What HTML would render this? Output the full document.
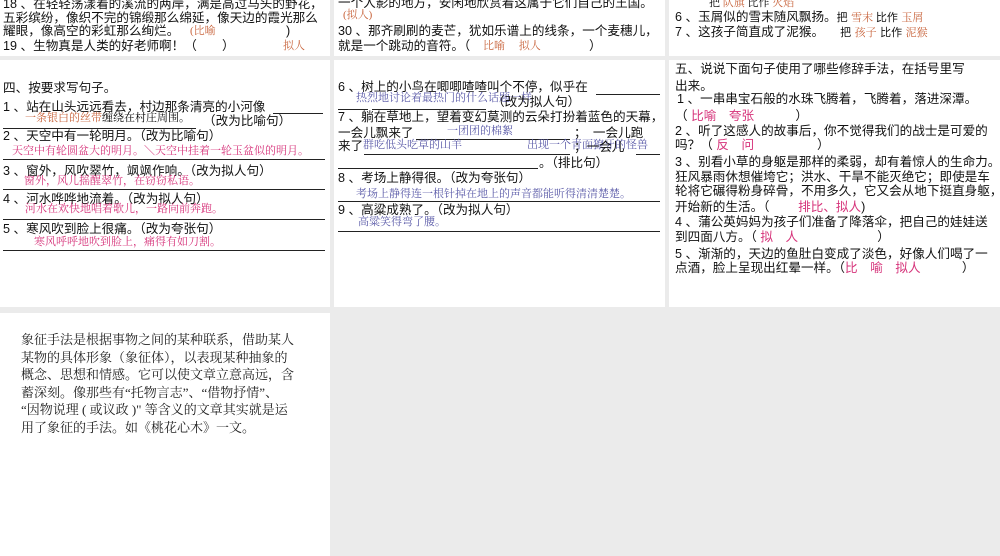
<!DOCTYPE html>
<html><head><meta charset="utf-8"><style>
body{margin:0;width:1000px;height:556px;background:#ebebeb;position:relative;overflow:hidden;font-family:"Liberation Sans","Noto Sans CJK SC",sans-serif;}
.p{position:absolute;background:#fff;overflow:hidden}
.l{position:absolute;white-space:nowrap;line-height:1;font-size:12.6px;color:#111}
.r{position:absolute;white-space:nowrap;line-height:1;font-size:11px;font-family:"Liberation Serif","Noto Serif CJK SC",serif}
.o{color:#c8643c}.k{color:#d6337a}.b{color:#5a5aa8}
.u{position:absolute;height:1px;background:#222}
.s{position:absolute;white-space:nowrap;line-height:17.5px;font-size:13px;color:#222;font-family:"Liberation Serif","Noto Serif CJK SC",serif}
</style></head><body>
<div class="p" style="left:0;top:0;width:330px;height:56px">
<div class="l" style="left:3px;top:-2px">18 、在轻轻荡漾着的溪流的两岸，满是高过马头的野花，</div>
<div class="l" style="left:3px;top:12px">五彩缤纷，像织不完的锦缎那么绵延，像天边的霞光那么</div>
<div class="l" style="left:3px;top:25px">耀眼，像高空的彩虹那么绚烂。</div>
<div class="r o" style="left:190px;top:26px">(比喻</div><div class="l" style="left:286px;top:25px">)</div>
<div class="l" style="left:3px;top:40px">19 、生物真是人类的好老师啊！（　　）</div>
<div class="r o" style="left:283px;top:41px">拟人</div>
</div>
<div class="p" style="left:334px;top:0;width:331px;height:56px">
<div class="l" style="left:4px;top:-3px">一个人影的地方，安闲地欣赏着这属于它们自己的王国。</div>
<div class="r o" style="left:9px;top:10px">(拟人)</div>
<div class="l" style="left:4px;top:25px">30 、那齐刷刷的麦芒，犹如乐谱上的线条，一个麦穗儿，</div>
<div class="l" style="left:4px;top:40px">就是一个跳动的音符。（</div>
<div class="r o" style="left:149px;top:41px">比喻　 拟人</div><div class="l" style="left:255px;top:40px">）</div>
</div>
<div class="p" style="left:669px;top:0;width:331px;height:56px">
<div class="r" style="left:40px;top:-2px"><span>把</span> <span class="o">队旗</span> 比作 <span class="o">火焰</span></div>
<div class="l" style="left:6px;top:11px">6 、玉屑似的雪末随风飘扬。<span style="font-size:11px">把</span> <span class="r o" style="position:static"> 雪末 </span> <span style="font-size:11px">比作</span> <span class="r o" style="position:static"> 玉屑</span></div>
<div class="l" style="left:6px;top:26px">7 、这孩子简直成了泥猴。 　<span style="font-size:11px">把</span> <span class="r o" style="position:static">孩子</span> <span style="font-size:11px">比作</span> <span class="r o" style="position:static">泥猴</span></div>
</div>
<div class="p" style="left:0;top:60px;width:330px;height:247px">
<div class="l" style="left:3px;top:22px">四、按要求写句子。</div>
<div class="l" style="left:3px;top:41px">1 、站在山头远远看去，村边那条清亮的小河像</div>
<div class="u" style="left:273px;top:53px;width:50px"></div>
<div class="r" style="left:25px;top:53px"><span class="o">一条银白的丝带</span>缠绕在村庄周围。</div>
<div class="l" style="left:203px;top:55px">（改为比喻句）</div>
<div class="u" style="left:3px;top:68px;width:193px"></div>
<div class="l" style="left:3px;top:70px">2 、天空中有一轮明月。（改为比喻句）</div>
<div class="r k" style="left:12px;top:86px">天空中有轮圆盆大的明月。＼天空中挂着一轮玉盆似的明月。</div>
<div class="u" style="left:3px;top:99px;width:322px"></div>
<div class="l" style="left:3px;top:105px">3 、窗外，风吹翠竹，飒飒作响。（改为拟人句）</div>
<div class="r k" style="left:24px;top:116px">窗外，风儿摇醒翠竹，在窃窃私语。</div>
<div class="u" style="left:3px;top:129px;width:322px"></div>
<div class="l" style="left:3px;top:133px">4 、河水哗哗地流着。（改为拟人句）</div>
<div class="r k" style="left:25px;top:144px">河水在欢快地唱着歌儿，一路向前奔跑。</div>
<div class="u" style="left:3px;top:159px;width:322px"></div>
<div class="l" style="left:3px;top:163px">5 、寒风吹到脸上很痛。（改为夸张句）</div>
<div class="r k" style="left:34px;top:177px">寒风呼呼地吹到脸上，痛得有如刀割。</div>
<div class="u" style="left:3px;top:190px;width:322px"></div>
</div>
<div class="p" style="left:334px;top:60px;width:331px;height:247px">
<div class="l" style="left:4px;top:21px">6 、树上的小鸟在唧唧喳喳叫个不停，似乎在</div>
<div class="u" style="left:262px;top:34px;width:64px"></div>
<div class="r b" style="left:22px;top:33px">热烈地讨论着最热门的什么话题一样</div>
<div class="l" style="left:158px;top:36px">（改为拟人句）</div>
<div class="u" style="left:4px;top:49px;width:30px"></div><div class="u" style="left:38px;top:49px;width:114px"></div>
<div class="l" style="left:4px;top:51px">7 、躺在草地上，望着变幻莫测的云朵打扮着蓝色的天幕，</div>
<div class="l" style="left:4px;top:67px">一会儿飘来了</div>
<div class="r b" style="left:113px;top:66px">一团团的棉絮</div>
<div class="u" style="left:82px;top:79px;width:154px"></div>
<div class="l" style="left:240px;top:67px">；　一会儿跑</div>
<div class="l" style="left:4px;top:80px">来了</div>
<div class="r b" style="left:29px;top:80px">群吃低头吃草的山羊</div>
<div class="r b" style="left:193px;top:80px">出现一个青面獠牙的怪兽</div>
<div class="l" style="left:240px;top:81px">；一会儿</div>
<div class="u" style="left:30px;top:94px;width:206px"></div><div class="u" style="left:302px;top:94px;width:24px"></div>
<div class="u" style="left:4px;top:108px;width:200px"></div>
<div class="l" style="left:205px;top:97px">。（排比句）</div>
<div class="l" style="left:4px;top:112px">8 、考场上静得很。（改为夸张句）</div>
<div class="r b" style="left:22px;top:129px">考场上静得连一根针掉在地上的声音都能听得清清楚楚。</div>
<div class="u" style="left:4px;top:141px;width:322px"></div>
<div class="l" style="left:4px;top:144px">9 、高粱成熟了。（改为拟人句）</div>
<div class="r b" style="left:24px;top:157px">高粱笑得弯了腰。</div>
<div class="u" style="left:4px;top:171px;width:322px"></div>
</div>
<div class="p" style="left:669px;top:60px;width:331px;height:247px">
<div class="l" style="left:6px;top:3px">五、说说下面句子使用了哪些修辞手法，在括号里写</div>
<div class="l" style="left:6px;top:20px">出来。</div>
<div class="l" style="left:8px;top:33px">1 、一串串宝石般的水珠飞腾着，飞腾着，落进深潭。</div>
<div class="l" style="left:6px;top:50px">（ <span class="k">比喻　夸张</span>　　　 ）</div>
<div class="l" style="left:6px;top:65px">2 、听了这感人的故事后，你不觉得我们的战士是可爱的</div>
<div class="l" style="left:6px;top:79px">吗？（ <span class="k">反　问</span>　　　　　）</div>
<div class="l" style="left:6px;top:96px">3 、别看小草的身躯是那样的柔弱，却有着惊人的生命力。</div>
<div class="l" style="left:6px;top:111px">狂风暴雨休想催垮它；洪水、干旱不能灭绝它；即使是车</div>
<div class="l" style="left:6px;top:125px">轮将它碾得粉身碎骨，不用多久，它又会从地下挺直身躯，</div>
<div class="l" style="left:6px;top:141px">开始新的生活。（　　 <span class="k">排比、拟人</span>)</div>
<div class="l" style="left:6px;top:156px">4 、蒲公英妈妈为孩子们准备了降落伞，把自己的娃娃送</div>
<div class="l" style="left:6px;top:171px">到四面八方。（ <span class="k">拟　人</span>　　　　　　 ）</div>
<div class="l" style="left:6px;top:188px">5 、渐渐的，天边的鱼肚白变成了淡色，好像人们喝了一</div>
<div class="l" style="left:6px;top:202px">点酒，脸上呈现出红晕一样。（<span class="k">比　喻　拟人</span>　　　 ）</div>
</div>
<div class="p" style="left:0;top:313px;width:330px;height:243px">
<div class="s" style="left:21px;top:18px">象征手法是根据事物之间的某种联系，借助某人<br>某物的具体形象（象征体），以表现某种抽象的<br>概念、思想和情感。它可以使文章立意高远，含<br>蓄深刻。像那些有“托物言志”、“借物抒情”、<br>“因物说理 ( 或议政 )" 等含义的文章其实就是运<br>用了象征的手法。如《桃花心木》一文。</div>
</div>
</body></html>
